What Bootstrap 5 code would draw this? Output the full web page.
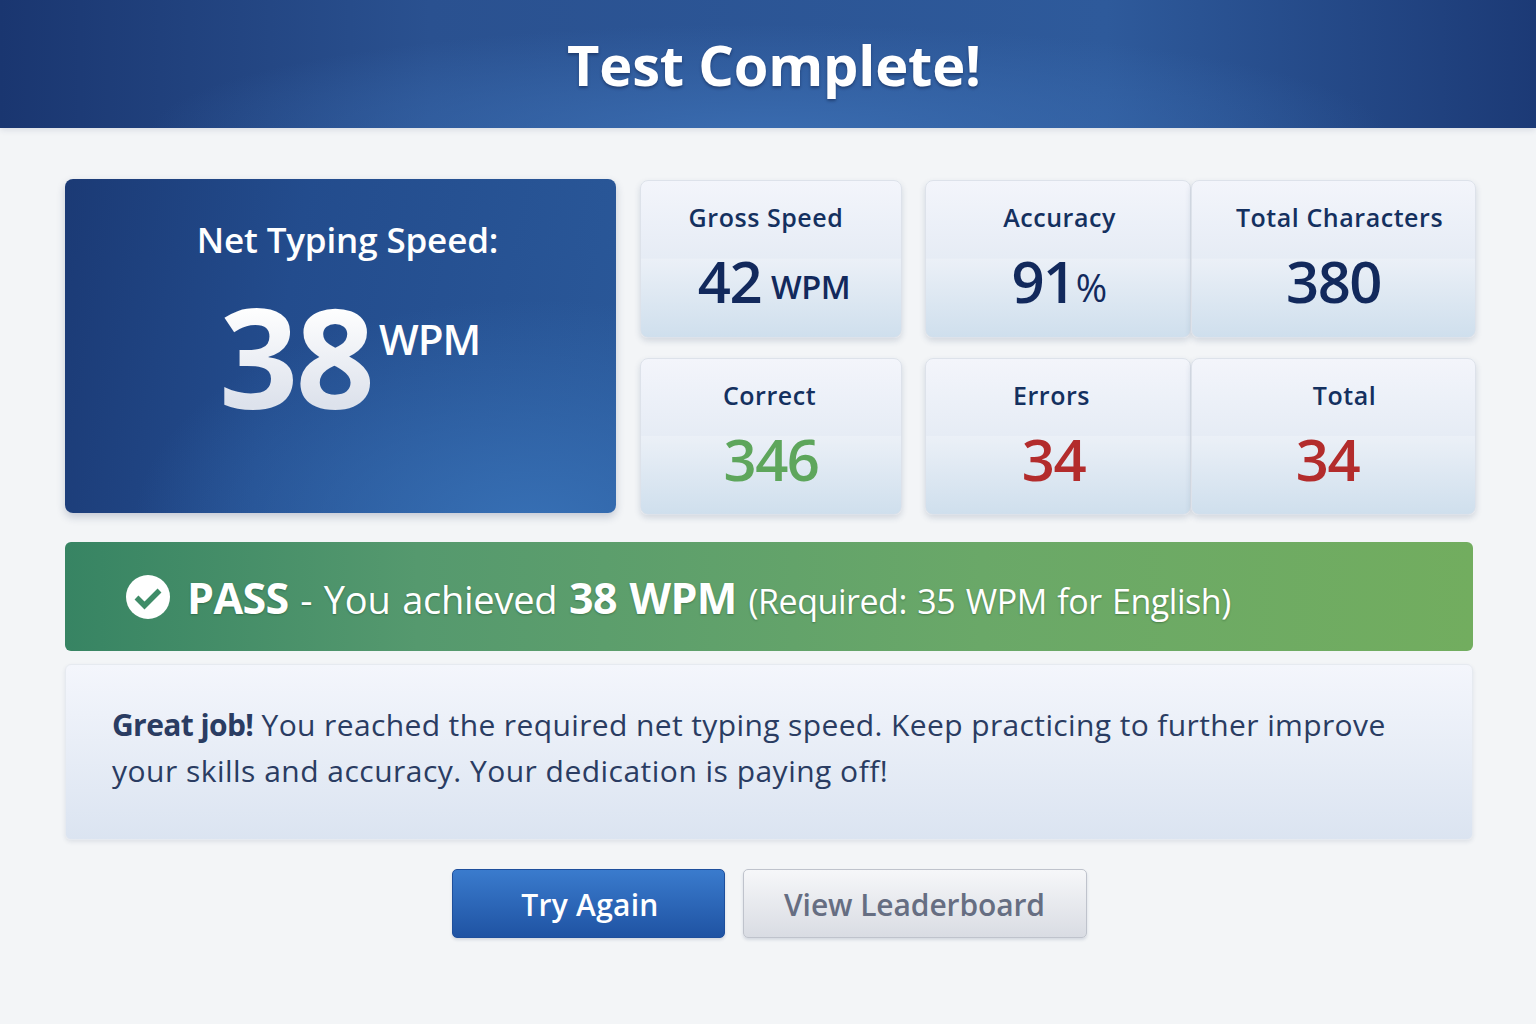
<!DOCTYPE html>
<html lang="en">
<head>
<meta charset="utf-8">
<title>Test Complete</title>
<link rel="stylesheet" href="https://cdn.jsdelivr.net/npm/bootstrap@5.3.0/dist/css/bootstrap.min.css">
<style>
html,body{height:100%}
body{background:#f3f5f7;font-family:"Open Sans","Noto Sans",sans-serif;width:1536px;height:1024px;overflow:hidden}
.top-bar{height:128px;background:radial-gradient(ellipse 620px 110px at 50% 105%,#3a6cb0 0%,rgba(58,108,176,0) 100%),linear-gradient(90deg,#1a3670 0%,#2a5190 28%,#2e5a9b 72%,#1c3a76 100%);box-shadow:0 2px 6px rgba(30,50,90,.12);padding-left:12px}
.top-bar h1{font-size:56px;font-weight:700;color:#fff;margin:0;letter-spacing:-.2px;line-height:1;padding-bottom:0;text-shadow:0 2px 3px rgba(10,25,60,.45)}
.page-body{padding:51px 60px 0 65px}
.hero-card{width:551px;height:334px;flex:none;border-radius:8px;background:radial-gradient(ellipse 400px 230px at 85% 105%,#3770b5 0%,rgba(55,112,181,0) 100%),linear-gradient(100deg,#1b3a75 0%,#234c8d 40%,#2a5899 100%);box-shadow:0 4px 9px rgba(30,50,90,.22);color:#fff;padding-top:39px}
.hero-label{font-size:35px;font-weight:600;line-height:44px;letter-spacing:-.15px;text-align:center;margin-left:14px}
.hero-value{padding-left:154px;margin-top:23px;height:140px;gap:7px}
.hero-num{font-size:139px;font-weight:700;line-height:140px;letter-spacing:-3px;background:linear-gradient(#fff 15%,#dde2ec 85%);-webkit-background-clip:text;background-clip:text;color:transparent}
.hero-unit{font-size:42px;font-weight:600;line-height:52px;letter-spacing:-1px;margin-top:28px}
.stats-side{margin:1px 0 0 24px;gap:20px;width:836px;flex:none}
.stat-row{height:157.5px}
.stat-box{height:100%;flex:none;border:1px solid #dde2ea;border-radius:8px;background:linear-gradient(#f3f5fb 0%,#e6ecf5 49.5%,#ebf0f7 50%,#cfdfed 100%);box-shadow:0 3px 6px rgba(40,60,100,.16);padding-top:19px;color:#14305f;text-align:center}
.w-a{width:262px;margin-right:23px}
.w-b{width:266px}
.w-c{width:285px}
.stat-title{font-size:25px;font-weight:600;line-height:34px;letter-spacing:.55px}
.stat-val{font-size:58px;font-weight:600;line-height:80px;letter-spacing:-1.5px;color:#12295c;margin-top:7px}
.stat-val small{font-size:32.5px;letter-spacing:-.5px;font-weight:600;margin-left:10px;vertical-align:4px}
.stat-val small.thin{font-weight:400;margin-left:1px;font-size:38px;vertical-align:1px}
.val-green{color:#5ea65c}
.val-red{color:#b32c2c}
.ta-gross{padding-right:10px}
.ta-acc{padding-left:3px;padding-right:0}
.ta-chars{padding-left:12px}
.ta-correct{padding-right:3px}
.ta-err{padding-right:13px}
.ta-total{padding-left:22px}
.va-gross{padding-left:6px}
.va-acc{padding-left:2px}
.va-err{padding-right:9px}
.va-total{padding-right:12px}
.pass-bar{width:1408px;height:109px;margin-top:27px;border-radius:6px;background:linear-gradient(90deg,#378463 0%,#55996e 25%,#6aa868 65%,#72ad5f 100%);color:#fff;padding-left:61px;text-shadow:0 1px 2px rgba(20,60,30,.4);gap:17px}
.pass-text{font-size:38px;line-height:1;letter-spacing:-.25px;word-spacing:2px;white-space:nowrap;padding-top:1px}
.pass-text b{font-size:43px;font-weight:700;letter-spacing:-.6px}
.pass-text span{font-size:34px;letter-spacing:-.45px}
.note-box{width:1408px;height:176px;margin-top:13px;border:1px solid #e6eaf0;border-radius:6px;background:linear-gradient(#f4f6fc 0%,#dbe4f1 100%);box-shadow:0 2px 4px rgba(40,60,100,.1);padding:37px 46px;font-size:30px;line-height:46px;color:#2a3c62;letter-spacing:.38px}
.note-box strong{font-weight:700;letter-spacing:-.6px}
.note-second{letter-spacing:.48px}
.action-row{margin-top:29px;width:1408px;gap:18px}
.btn.btn-go,.btn.btn-alt{height:69px;font-size:30px;font-weight:600;line-height:1;border-radius:5px;display:flex;align-items:center;justify-content:center;padding:2px 0 0;box-shadow:0 2px 3px rgba(40,60,100,.15)}
.btn.btn-go{width:273px;color:#fff;border:1px solid #1e4f9c;background:linear-gradient(#3a7bcd,#1f53a3);letter-spacing:.25px;padding-left:4px}
.btn.btn-alt{width:344px;color:#666e82;border:1.5px solid #bfc3cc;background:linear-gradient(#f6f7f9,#d9dce3);letter-spacing:-.1px}
.check-mark{width:44px;height:44px;flex:none}
</style>
</head>
<body>
<header class="top-bar d-flex align-items-center justify-content-center"><h1>Test Complete!</h1></header>
<main class="page-body">
  <section class="d-flex">
    <div class="hero-card">
      <div class="hero-label">Net Typing Speed:</div>
      <div class="hero-value d-flex align-items-start"><span class="hero-num">38</span><span class="hero-unit">WPM</span></div>
    </div>
    <div class="stats-side d-flex flex-column">
      <div class="stat-row d-flex">
        <div class="stat-box w-a"><div class="stat-title ta-gross">Gross Speed</div><div class="stat-val va-gross">42<small>WPM</small></div></div>
        <div class="stat-box w-b"><div class="stat-title ta-acc">Accuracy</div><div class="stat-val va-acc">91<small class="thin">%</small></div></div>
        <div class="stat-box w-c"><div class="stat-title ta-chars">Total Characters</div><div class="stat-val">380</div></div>
      </div>
      <div class="stat-row d-flex">
        <div class="stat-box w-a"><div class="stat-title ta-correct">Correct</div><div class="stat-val val-green">346</div></div>
        <div class="stat-box w-b"><div class="stat-title ta-err">Errors</div><div class="stat-val val-red va-err">34</div></div>
        <div class="stat-box w-c"><div class="stat-title ta-total">Total</div><div class="stat-val val-red va-total">34</div></div>
      </div>
    </div>
  </section>
  <div class="pass-bar d-flex align-items-center">
    <svg class="check-mark" viewBox="0 0 44 44" aria-hidden="true"><circle cx="22" cy="22" r="22" fill="#fff"/><path d="M10.5 22.5l8 8 15-15" fill="none" stroke="#3f8c68" stroke-width="5.5"/></svg>
    <div class="pass-text"><b>PASS</b> - You achieved <b>38 WPM</b> <span>(Required: 35 WPM for English)</span></div>
  </div>
  <div class="note-box"><strong>Great job!</strong> <span>You reached the required net typing speed. Keep practicing to further improve</span><br><span class="note-second">your skills and accuracy. Your dedication is paying off!</span></div>
  <div class="action-row d-flex justify-content-center">
    <button class="btn btn-go" type="button">Try Again</button>
    <button class="btn btn-alt" type="button">View Leaderboard</button>
  </div>
</main>
<script src="https://cdn.jsdelivr.net/npm/bootstrap@5.3.0/dist/js/bootstrap.bundle.min.js"></script>
</body>
</html>
